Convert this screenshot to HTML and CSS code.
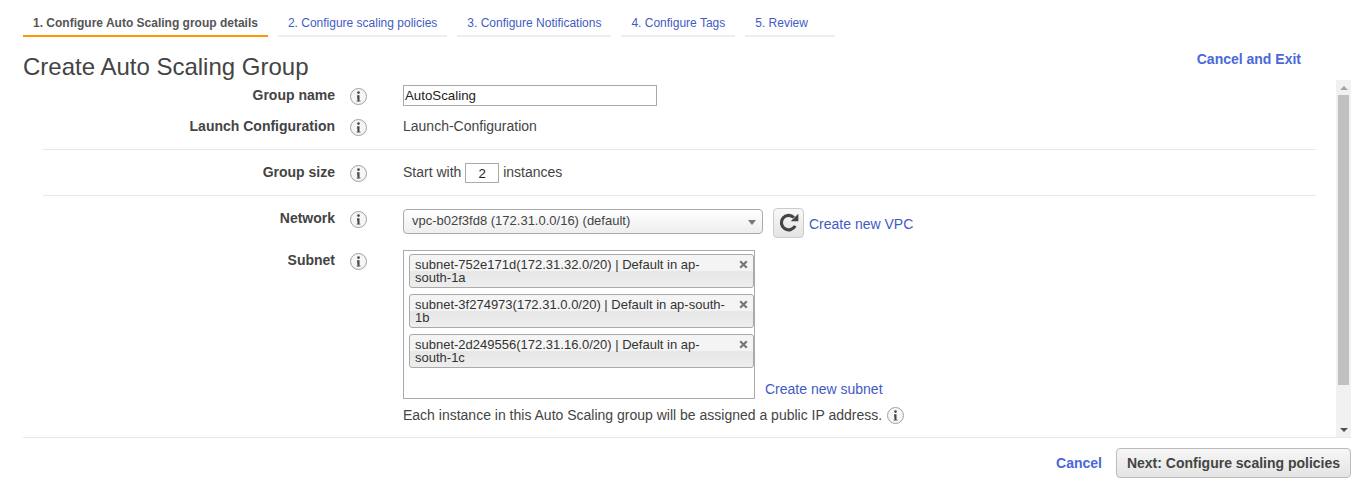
FILE: index.html
```html
<!DOCTYPE html>
<html lang="en">
<head>
<meta charset="utf-8">
<title>Create Auto Scaling Group</title>
<link rel="stylesheet" href="styles.css">
</head>
<body>
<svg class="defs" width="0" height="0">
  <symbol id="i-info" viewBox="0 0 17 17">
    <circle cx="8.5" cy="8.5" r="8" fill="#f6f6f6" stroke="#a0a0a0"/>
    <circle cx="8.5" cy="4.6" r="1.3" fill="#444"/>
    <path d="M7 7.2h2.5v5.6h1v.8H6.6v-.8h1z" fill="#444"/>
  </symbol>
  <symbol id="i-x" viewBox="0 0 9 9">
    <path d="M1.2 1.2l6.6 6.6M7.8 1.2L1.2 7.8" fill="none" stroke="#777" stroke-width="2.2"/>
  </symbol>
</svg>
<div class="page">
  <nav class="tabs">
    <a class="tab active">1. Configure Auto Scaling group details</a>
    <a class="tab">2. Configure scaling policies</a>
    <a class="tab">3. Configure Notifications</a>
    <a class="tab">4. Configure Tags</a>
    <a class="tab last">5. Review</a>
  </nav>
  <header class="head">
    <h1>Create Auto Scaling Group</h1>
    <a class="exit">Cancel and Exit</a>
  </header>
  <div class="scroller">
    <div class="content">
      <section class="group g1">
        <div class="row r-name">
          <label>Group name</label>
          <svg class="info"><use href="#i-info"/></svg>
          <div class="val"><input class="text" value="AutoScaling"></div>
        </div>
        <div class="row r-launch">
          <label>Launch Configuration</label>
          <svg class="info"><use href="#i-info"/></svg>
          <div class="val">Launch-Configuration</div>
        </div>
      </section>
      <section class="group g2">
        <div class="row">
          <label>Group size</label>
          <svg class="info"><use href="#i-info"/></svg>
          <div class="val size">Start with <input class="num" value="2"> instances</div>
        </div>
      </section>
      <section class="g3">
        <div class="row r-net">
          <label>Network</label>
          <svg class="info"><use href="#i-info"/></svg>
          <div class="val net">
            <div class="select">vpc-b02f3fd8 (172.31.0.0/16) (default)<span class="caret"></span></div>
            <button class="refresh" aria-label="Refresh">
              <svg width="22" height="22" viewBox="0 0 20 20"><path d="M15.6 12.6A6.6 6.6 0 1 1 14.4 5" fill="none" stroke="#444" stroke-width="2.9"/><path d="M11.6 8.4h6.9V1.6z" fill="#444"/></svg>
            </button>
            <a class="link">Create new VPC</a>
          </div>
        </div>
        <div class="row r-sub">
          <label>Subnet</label>
          <svg class="info"><use href="#i-info"/></svg>
          <div class="val sub">
            <div class="multi">
              <div class="chip">subnet-752e171d(172.31.32.0/20) | Default in ap-south-1a<svg class="x"><use href="#i-x"/></svg></div>
              <div class="chip">subnet-3f274973(172.31.0.0/20) | Default in ap-south-1b<svg class="x"><use href="#i-x"/></svg></div>
              <div class="chip">subnet-2d249556(172.31.16.0/20) | Default in ap-south-1c<svg class="x"><use href="#i-x"/></svg></div>
            </div>
            <a class="link">Create new subnet</a>
          </div>
        </div>
        <div class="row r-note">
          <div class="note">Each instance in this Auto Scaling group will be assigned a public IP address. <svg class="info"><use href="#i-info"/></svg></div>
        </div>
      </section>
    </div>
    <div class="scrollbar">
      <span class="arrow up"></span>
      <span class="thumb"></span>
      <span class="arrow down"></span>
    </div>
  </div>
  <footer class="foot">
    <a class="cancel">Cancel</a>
    <button class="next">Next: Configure scaling policies</button>
  </footer>
</div>
</body>
</html>
```
FILE: styles.css
```css
* { box-sizing: border-box; }
html, body { margin: 0; padding: 0; background: #fff; }
body { font-family: "Liberation Sans", Arial, sans-serif; font-size: 14px; color: #444; height: 491px; overflow: hidden; }
.defs { position: absolute; }
.page { padding: 11px 12px 0 23px; }
.tabs { display: flex; gap: 10px; height: 26px; }
.tab { height: 26px; padding: 5px 10px 0; font-size: 12px; line-height: 14px; color: #3f5bc4; border-bottom: 2px solid #eee; }
.tab.last { width: 90px; }
.tab.active { color: #555; font-weight: bold; border-bottom-color: #f90; }
.head { display: flex; justify-content: space-between; height: 44px; }
h1 { margin: 16px 0 0; font-size: 24px; font-weight: normal; line-height: 28px; color: #444; }
.exit { margin: 14px 50px 0 0; font-weight: bold; line-height: 16px; color: #4a68d8; }
.scroller { display: flex; height: 357px; border-bottom: 1px solid #e8e8e8; }
.content { flex: 1; padding-left: 20px; padding-right: 20px; }
.group { border-bottom: 1px solid #e8e8e8; }
.g1 { height: 69px; padding-top: 4px; }
.g2 { height: 46px; padding-top: 12px; }
.g3 { padding-top: 12px; }
.row { display: grid; grid-template-columns: 292px 68px 1fr; align-items: start; }
.row label { text-align: right; font-weight: bold; line-height: 20px; }
.row > .info { margin: 3px 0 0 15px; }
.val { line-height: 20px; }
.r-launch { margin-top: 10px; }
.info { display: inline-block; width: 17px; height: 17px; }
.text { display: block; width: 254px; height: 21px; padding: 0 1px 0 1px; border: 1px solid #aaa; font: 13.3px "Liberation Sans", Arial, sans-serif; color: #222; outline: 0; }
.num { width: 34px; height: 20px; margin: 0; padding: 0; border: 1px solid #aaa; text-align: center; font: 13.3px "Liberation Sans", Arial, sans-serif; color: #222; vertical-align: middle; }
.net { display: flex; align-items: flex-start; }
.select { position: relative; width: 360px; height: 25px; margin-top: 1px; padding-left: 8px; border: 1px solid #aaa; border-radius: 4px; font-size: 13px; line-height: 22px; background: linear-gradient(#fff, #eee); }
.caret { position: absolute; right: 6px; top: 10px; border: 4px solid transparent; border-top: 5px solid #777; border-bottom: 0; }
.refresh { display: flex; align-items: center; justify-content: center; width: 31px; height: 30px; margin-left: 10px; padding: 0; border: 1px solid #ccc; border-radius: 4px; background: linear-gradient(#f8f8f8, #e4e4e4); }
.link { color: #3f5bc4; }
.net .link { margin: 6px 0 0 5px; }
.r-sub { margin-top: 12px; }
.sub { position: relative; display: flex; align-items: flex-end; }
.sub .link { margin: 0 0 0 10px; padding-bottom: 0; }
.multi { width: 352px; height: 149px; padding: 3px 0 0 5px; border: 1px solid #aaa; }
.chip { position: relative; width: 345px; height: 34px; margin-bottom: 6px; padding: 3px 26px 0 5px; border: 1px solid #aaa; border-radius: 3px; font-size: 13px; line-height: 13px; color: #333; background: linear-gradient(#f4f4f4 48%, #e6e6e6 52%, #eee); }
.x { position: absolute; right: 5px; top: 5px; width: 9px; height: 9px; }
.r-note { display: block; margin-top: 6px; padding-left: 360px; }
.note { line-height: 20px; white-space: nowrap; }
.note .info { margin-left: 1px; vertical-align: -4px; }
.scrollbar { position: relative; width: 15px; margin-top: -1px; background: #f1f1f1; }
.thumb { position: absolute; left: 2px; right: 2px; top: 15px; height: 290px; background: #c1c1c1; }
.arrow { position: absolute; left: 4px; border: 4px solid transparent; }
.arrow.up { top: 6px; border-top: 0; border-bottom: 4px solid #a3a3a3; }
.arrow.down { bottom: 5px; border-bottom: 0; border-top: 4px solid #505050; }
.foot { display: flex; justify-content: flex-end; align-items: center; gap: 14px; margin-top: 10px; }
.cancel { font-weight: bold; color: #4a68d8; }
.next { width: 235px; height: 30px; padding: 0; border: 1px solid #bbb; border-radius: 4px; font: bold 14px "Liberation Sans", Arial, sans-serif; color: #444; background: linear-gradient(#f6f6f6, #e4e4e4); }
```
